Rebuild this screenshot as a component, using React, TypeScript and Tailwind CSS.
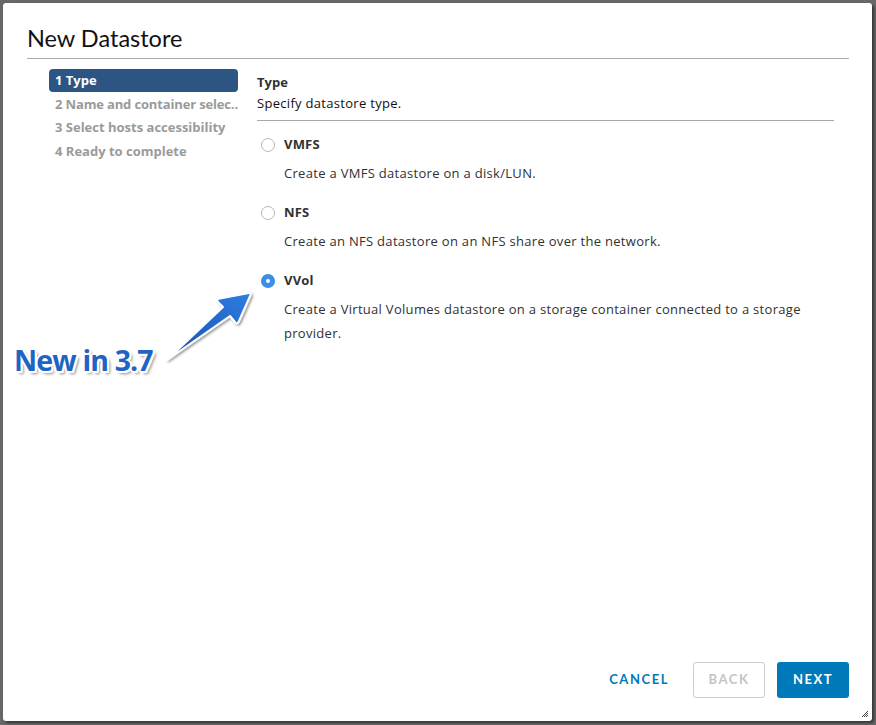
import React from "react";

const body = "font-['Open_Sans',sans-serif]";

function Radio({ checked }: { checked?: boolean }) {
  if (checked) {
    return (
      <span className="flex h-[14px] w-[14px] items-center justify-center rounded-full bg-[#3a8ee6]">
        <span className="h-[4px] w-[4px] rounded-full bg-white" />
      </span>
    );
  }
  return <span className="h-[14px] w-[14px] rounded-full border border-[#b8b8b8] bg-white" />;
}

function Option({ label, desc, checked }: { label: string; desc: React.ReactNode; checked?: boolean }) {
  return (
    <div className="flex flex-col">
      <div className="flex h-[24px] items-center">
        <div className="flex w-[27px] items-center pl-[4px]">
          <Radio checked={checked} />
        </div>
        <span className="text-[13px] font-bold tracking-[0.2px] text-[#313131]">{label}</span>
      </div>
      <div className="mt-[4px] pl-[27px] text-[13px] leading-[24px] tracking-[0.3px] text-[#313131]">{desc}</div>
    </div>
  );
}

export default function App() {
  return (
    <div className={`${body} relative flex h-[725px] w-[876px] bg-[#686868] p-[3px] pr-[4px] pb-[4px]`}>
      <div className="relative flex flex-1 flex-col rounded-[3px] bg-white pl-[24px] pr-[23px] pb-[23px] shadow-[2px_2px_3px_rgba(0,0,0,0.5)]">
        {/* Header */}
        <div className="pt-[19px]">
          <div className="h-[32px] font-['Lato',sans-serif] text-[23.5px] leading-[32px] text-[#111]">New Datastore</div>
          <div className="mt-[4px] border-b border-[#a8a8a8]" />
        </div>

        {/* Body */}
        <div className="flex flex-1 pt-[10px]">
          <nav className="ml-[22px] flex w-[189px] flex-col">
            <div className="flex h-[23px] items-center rounded-[4px] bg-[#2d5583] px-[6px] text-[13px] font-bold text-white">
              1 Type
            </div>
            <div className="flex h-[24px] items-center whitespace-nowrap pl-[6px] pt-[1px] text-[13px] font-bold tracking-[-0.15px] text-[#9a9a9a]">
              2 Name and container selec..
            </div>
            <div className="flex h-[24px] items-center whitespace-nowrap px-[6px] text-[13px] font-bold text-[#9a9a9a]">
              3 Select hosts accessibility
            </div>
            <div className="flex h-[24px] items-center px-[6px] text-[13px] font-bold text-[#9a9a9a]">
              4 Ready to complete
            </div>
          </nav>

          <div className="ml-[19px] mr-[15px] flex flex-1 flex-col pt-[3px]">
            <div className="border-b border-[#a8a8a8] pb-[6px]">
              <div className="flex h-[22px] items-center text-[13px] font-bold text-[#313131]">Type</div>
              <div className="flex h-[20px] items-center text-[13px] tracking-[0.3px] text-[#111]">Specify datastore type.</div>
            </div>
            <div className="mt-[12px] flex flex-col gap-[16px]">
              <Option label="VMFS" desc="Create a VMFS datastore on a disk/LUN." />
              <Option label="NFS" desc="Create an NFS datastore on an NFS share over the network." />
              <Option
                label="VVol"
                checked
                desc={
                  <>
                    Create a Virtual Volumes datastore on a storage container connected to a storage
                    <br />
                    provider.
                  </>
                }
              />
            </div>
          </div>
        </div>

        {/* Footer */}
        <div className="flex items-center justify-end gap-[12px]">
          <button className="h-[36px] px-[12px] font-['Lato',sans-serif] text-[13px] font-bold tracking-[0.12em] text-[#0079b8]">CANCEL</button>
          <button className="h-[36px] w-[72px] rounded-[3px] border border-[#cccccc] font-['Lato',sans-serif] text-[13px] font-bold tracking-[0.12em] text-[#c4c4c4]">
            BACK
          </button>
          <button className="h-[36px] w-[72px] rounded-[3px] bg-[#0079b8] font-['Lato',sans-serif] text-[13px] font-bold tracking-[0.12em] text-white">
            NEXT
          </button>
        </div>

        {/* resize grip */}
        <svg className="absolute bottom-[3px] right-[3px]" width="8" height="8" viewBox="0 0 8 8">
          <path d="M7 1 L1 7 M7 3 L3 7 M7 5 L5 7" stroke="#444" strokeWidth="1" />
        </svg>
      </div>

      {/* Annotation */}
      <div className="absolute left-[14px] top-[339px] font-['Open_Sans',sans-serif] text-[28.5px] font-bold leading-[42px] tracking-[-0.03em] text-[#1f64c4] [text-shadow:0_0_2px_#fff,1px_1px_0_#fff,-1px_-1px_0_#fff,1px_-1px_0_#fff,-1px_1px_0_#fff,2px_2px_0_#fff,2px_0_0_#fff,0_2px_0_#fff,-2px_0_0_#fff,0_-2px_0_#fff,3px_3px_3px_rgba(0,0,0,0.45)]">
        New in 3.7
      </div>
      <svg className="absolute left-[160px] top-[285px]" width="100" height="85" viewBox="0 0 100 85">
        <defs>
          <linearGradient id="ag" x1="0" y1="1" x2="1" y2="0">
            <stop offset="0" stopColor="#1a4fae" />
            <stop offset="1" stopColor="#2f7de2" />
          </linearGradient>
          <filter id="sh" x="-20%" y="-20%" width="140%" height="140%">
            <feDropShadow dx="1.5" dy="1.5" stdDeviation="1.2" floodColor="#000" floodOpacity="0.4" />
          </filter>
        </defs>
        <path
          d="M7 75 L63 22 L58 17 Q56 14 60 13.5 L89 8 Q91 8 90.5 10 L79 36 Q77 40 75 37 L70 31 Z"
          fill="url(#ag)"
          stroke="#fff"
          strokeWidth="2"
          strokeLinejoin="round"
          filter="url(#sh)"
        />
      </svg>
    </div>
  );
}
